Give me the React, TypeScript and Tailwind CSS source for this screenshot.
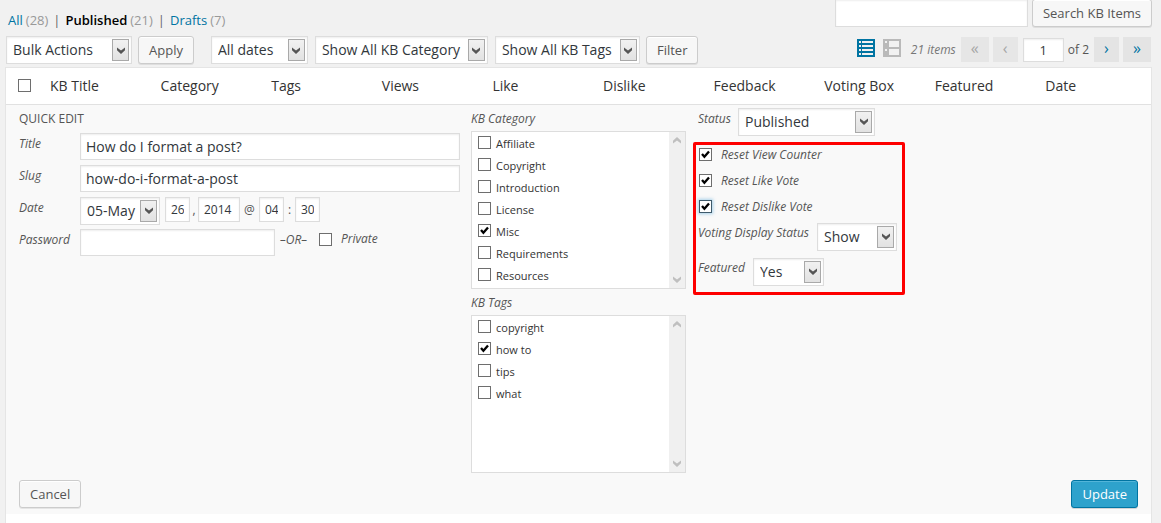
import type { ReactNode } from "react";
import clsx from "clsx";

const fieldBase =
  "border border-[#ddd] bg-white text-[#32373c] shadow-[inset_0_1px_2px_rgba(0,0,0,0.07)] outline-none";

function Select({ id, label, options, className }: { id: string; label?: string; options: string[]; className: string }) {
  return (
    <span className={clsx("relative block h-7 shrink-0", className)}>
      <select
        id={id}
        aria-label={label}
        className={clsx(fieldBase, "block h-7 w-full appearance-none pr-5 pl-1.5 text-sm leading-6")}
      >
        {options.map((o) => (
          <option key={o}>{o}</option>
        ))}
      </select>
      <span className="pointer-events-none absolute top-[3px] right-[3px] flex h-[22px] w-[17px] items-center justify-center border border-[#a9a9a9] bg-linear-to-b from-[#f1f1f1] to-[#e2e2e2]">
        <svg width="8" height="7" viewBox="0 0 8 7" aria-hidden="true">
          <path d="M0 0.5 L4 3.5 L8 0.5 V3.3 L4 7 L0 3.3 Z" fill="#555" />
        </svg>
      </span>
    </span>
  );
}

function Check({ id, label, checked, glow }: { id: string; label?: string; checked?: boolean; glow?: boolean }) {
  return (
    <span className="relative block size-[13px] shrink-0">
      <input
        id={id}
        type="checkbox"
        aria-label={label}
        defaultChecked={checked}
        className={clsx(
          "peer block size-[13px] appearance-none border bg-white",
          glow ? "border-[#3f5a6b] shadow-[0_0_3px_1px_rgba(90,170,220,0.5)]" : "border-[#6e6e6e]",
        )}
      />
      <svg
        viewBox="0 0 13 13"
        className="pointer-events-none absolute inset-0 hidden size-[13px] peer-checked:block"
        aria-hidden="true"
      >
        <path d="M3 6 L5.4 8.8 L10 3.4" fill="none" stroke="#000" strokeWidth="2.3" />
      </svg>
    </span>
  );
}

function Button({ children, primary }: { children: ReactNode; primary?: boolean }) {
  return (
    <button
      type="button"
      className={clsx(
        "block h-7 shrink-0 rounded-[3px] border px-2.5 text-[13px] leading-[26px] whitespace-nowrap",
        primary
          ? "border-[#0074a2] bg-[#2ea2cc] text-white shadow-[inset_0_1px_0_rgba(120,200,230,0.5),0_1px_0_rgba(0,0,0,0.15)]"
          : "border-[#ccc] bg-[#f7f7f7] text-[#555] shadow-[inset_0_1px_0_#fff,0_1px_0_rgba(0,0,0,0.08)]",
      )}
    >
      {children}
    </button>
  );
}

function PageStep({ children, label, off, className }: { children: string; label: string; off?: boolean; className: string }) {
  return (
    <a
      href="#page"
      aria-label={label}
      className={clsx(
        "flex h-[25px] items-center justify-center pb-1 text-base leading-4",
        off ? "bg-[#e6e6e6] text-[#a5a5a5]" : "bg-[#e4e4e4] text-[#0074a2]",
        className,
      )}
    >
      {children}
    </a>
  );
}

function ItalicLabel({ htmlFor, children, className }: { htmlFor: string; children: string; className?: string }) {
  return (
    <label htmlFor={htmlFor} className={clsx("block text-xs leading-5 whitespace-nowrap text-[#555] italic", className)}>
      {children}
    </label>
  );
}

function ScrollMark({ down }: { down?: boolean }) {
  return (
    <svg width="8" height="7" viewBox="0 0 8 7" className={clsx(down && "rotate-180")} aria-hidden="true">
      <path d="M0 6.5 L4 3.5 L8 6.5 V3.7 L4 0 L0 3.7 Z" fill="#bfbfbf" />
    </svg>
  );
}

function TermList({ title, terms, checked }: { title: string; terms: string[]; checked: string }) {
  return (
    <fieldset>
      <legend className="block h-[26px] pt-1 text-xs leading-5 text-[#555] italic">{title}</legend>
      <div className="flex h-[158px] border border-[#ddd] bg-white">
        <ul className="flex grow flex-col gap-px pt-[3px] pl-1.5">
          {terms.map((t) => (
            <li key={t} className="flex h-[21px] items-start gap-[5px] pt-px">
              <Check id={`term-${t}`} checked={t === checked} />
              <label htmlFor={`term-${t}`} className="text-[11px] leading-4 text-[#333]">
                {t}
              </label>
            </li>
          ))}
        </ul>
        <div className="flex w-4 flex-col items-center justify-between bg-[#f0f0f0] py-[5px]">
          <ScrollMark />
          <ScrollMark down />
        </div>
      </div>
    </fieldset>
  );
}

function TextField({ id, label, value }: { id: string; label: string; value: string }) {
  return (
    <div className="flex h-8">
      <ItalicLabel htmlFor={id} className="w-[61px] shrink-0 pt-px">
        {label}
      </ItalicLabel>
      <input id={id} type="text" defaultValue={value} className={clsx(fieldBase, "h-[27px] min-w-0 grow px-[5px] text-sm")} />
    </div>
  );
}

function DatePart({ label, value, className }: { label: string; value: string; className: string }) {
  return (
    <input
      type="text"
      aria-label={label}
      defaultValue={value}
      className={clsx(fieldBase, "h-[25px] shrink-0 px-[5px] text-xs", className)}
    />
  );
}

function QuickEdit() {
  return (
    <form className="bg-[#f9f9f9] pl-[13px] text-[#555]">
      <div className="grid grid-cols-[441fr_215fr_454fr] gap-[11px]">
        <fieldset>
          <legend className="block h-7 pt-[5px] text-xs leading-[18px] font-medium">QUICK EDIT</legend>
          <TextField id="title" label="Title" value="How do I format a post?" />
          <TextField id="slug" label="Slug" value="how-do-i-format-a-post" />
          <div className="flex h-8 text-xs leading-[25px]">
            <ItalicLabel htmlFor="month" className="w-[61px] shrink-0 pt-px">
              Date
            </ItalicLabel>
            <Select id="month" options={["05-May"]} className="mr-[5px] w-20" />
            <DatePart label="Day" value="26" className="w-[25px]" />
            <span className="w-2 text-center">,</span>
            <DatePart label="Year" value="2014" className="w-[42px]" />
            <span className="w-[19px] text-center">@</span>
            <DatePart label="Hour" value="04" className="w-[25px]" />
            <span className="w-[11px] text-center">:</span>
            <DatePart label="Minute" value="30" className="w-[25px]" />
          </div>
          <div className="flex h-8">
            <ItalicLabel htmlFor="password" className="w-[61px] shrink-0 pt-px">
              Password
            </ItalicLabel>
            <input id="password" type="text" className={clsx(fieldBase, "h-[27px] w-[195px] px-[5px] text-sm")} />
            <em className="w-11 pt-px pl-[5px] text-xs leading-5">–OR–</em>
            <div className="flex h-[21px] items-center gap-[9px]">
              <Check id="private" />
              <ItalicLabel htmlFor="private">Private</ItalicLabel>
            </div>
          </div>
        </fieldset>

        <div>
          <TermList
            title="KB Category"
            terms={["Affiliate", "Copyright", "Introduction", "License", "Misc", "Requirements", "Resources"]}
            checked="Misc"
          />
          <TermList title="KB Tags" terms={["copyright", "how to", "tips", "what"]} checked="how to" />
        </div>

        <div className="pt-[3px]">
          <div className="flex pl-px">
            <ItalicLabel htmlFor="status" className="w-10 pt-px">
              Status
            </ItalicLabel>
            <Select id="status" options={["Published"]} className="w-[137px]" />
          </div>
          <div className="mt-1.5 -ml-1 h-[153px] w-[212px] rounded-[2px] border-[3px] border-[#fe0000] pl-0.5">
            {["Reset View Counter", "Reset Like Vote", "Reset Dislike Vote"].map((t, i) => (
              <div key={t} className="flex h-[26px] items-start gap-[9px] pl-px">
                <div className="pt-[3px]">
                  <Check id={`reset-${i}`} checked glow={i === 2} />
                </div>
                <ItalicLabel htmlFor={`reset-${i}`}>{t}</ItalicLabel>
              </div>
            ))}
            <div className="flex h-[35px]">
              <ItalicLabel htmlFor="voting" className="w-[119px]">
                Voting Display Status
              </ItalicLabel>
              <Select id="voting" options={["Show", "Hide"]} className="w-20" />
            </div>
            <div className="flex">
              <ItalicLabel htmlFor="featured" className="w-[55px]">
                Featured
              </ItalicLabel>
              <Select id="featured" options={["Yes", "No"]} className="w-[71px]" />
            </div>
          </div>
        </div>
      </div>
      <div className="flex justify-between pt-[7px] pr-[13px] pb-1.5">
        <Button>Cancel</Button>
        <Button primary>Update</Button>
      </div>
    </form>
  );
}

const columns = ["KB Title", "Category", "Tags", "Views", "Like", "Dislike", "Feedback", "Voting Box", "Featured", "Date"];

export default function App() {
  return (
    <main className="flex min-h-screen flex-col bg-[#f1f1f1] pr-[9px] pl-[5px] font-['Open_Sans',sans-serif] text-[13px] text-[#555]">
      <div className="flex h-9 justify-between">
        <nav className="flex gap-[5px] pt-2.5 pl-[3px] leading-5 whitespace-nowrap text-[#666]">
          <span className="flex gap-[3px]">
            <a href="#all" className="text-[#0074a2]">All</a> <span className="text-[#999]">(28)</span>
          </span>
          <span>|</span>
          <span className="flex gap-[3px]">
            <a href="#published" className="font-semibold text-black">Published</a> <span className="text-[#999]">(21)</span>
          </span>
          <span>|</span>
          <span className="flex gap-[3px]">
            <a href="#drafts" className="text-[#0074a2]">Drafts</a> <span className="text-[#999]">(7)</span>
          </span>
        </nav>
        <div className="-mt-px flex gap-1">
          <input type="search" aria-label="Search" className={clsx(fieldBase, "h-7 w-[193px] px-[5px] text-sm")} />
          <Button>Search KB Items</Button>
        </div>
      </div>

      <div className="flex h-[31px] items-start justify-between">
        <div className="flex gap-[7px] pl-px">
          <div className="flex gap-1.5 pr-[10px]">
            <Select id="bulk" label="Bulk actions" options={["Bulk Actions"]} className="w-[126px]" />
            <Button>Apply</Button>
          </div>
          <Select id="dates" label="Dates" options={["All dates"]} className="w-[97px]" />
          <Select id="category" label="Category" options={["Show All KB Category"]} className="w-[173px]" />
          <div className="flex gap-1.5">
            <Select id="tags" label="Tags" options={["Show All KB Tags"]} className="w-[145px]" />
            <Button>Filter</Button>
          </div>
        </div>
        <div className="flex gap-1 pt-px pr-px">
          <div className="flex gap-2 pt-0.5 pr-1.5">
            <a href="#list" aria-label="List view" className="block">
              <svg width="18" height="18" viewBox="0 0 18 18" shapeRendering="crispEdges">
                <path d="M0 0H18V18H0Z" fill="#0074a2" />
                <path
                  d="M2 2h2v2H2zM5 2h11v2H5zM2 6h2v2H2zM5 6h11v2H5zM2 10h2v2H2zM5 10h11v2H5zM2 14h2v2H2zM5 14h11v2H5z"
                  fill="#f1f1f1"
                />
              </svg>
            </a>
            <a href="#excerpt" aria-label="Excerpt view" className="block">
              <svg width="18" height="18" viewBox="0 0 18 18" shapeRendering="crispEdges">
                <path d="M0 0H18V18H0Z" fill="#b9b9b9" />
                <path d="M2 2h2v2H2zM6 2h10v6H6zM2 10h2v2H2zM6 10h10v6H6z" fill="#f1f1f1" />
              </svg>
            </a>
          </div>
          <em className="pr-px text-xs leading-[25px] whitespace-nowrap text-[#777]">21 items</em>
          <PageStep off label="First page" className="w-7">«</PageStep>
          <PageStep off label="Previous page" className="w-[25px]">‹</PageStep>
          <input
            type="text"
            aria-label="Current page"
            defaultValue="1"
            className={clsx(fieldBase, "mt-px ml-px h-6 w-[41px] text-center text-[13px]")}
          />
          <span className="pr-px text-xs leading-[25px] whitespace-nowrap">of 2</span>
          <PageStep label="Next page" className="w-[25px]">›</PageStep>
          <PageStep label="Last page" className="w-7">»</PageStep>
        </div>
      </div>

      <div className="grow border border-b-0 border-[#e5e5e5] bg-white">
        <table className="w-full table-fixed border-collapse">
          <thead>
            <tr className="h-9 border-b border-[#e1e1e1]">
              <th className="w-[35px] p-0 pl-3">
                <Check id="select-all" label="Select all" />
              </th>
              {columns.map((c, i) => (
                <th
                  key={c}
                  scope="col"
                  className={clsx(
                    "p-0 pl-[9px] text-left text-sm font-normal whitespace-nowrap text-[#333]",
                    i < columns.length - 1 && "w-[9.66%]",
                  )}
                >
                  {c}
                </th>
              ))}
            </tr>
          </thead>
          <tbody>
            <tr>
              <td colSpan={11} className="p-0">
                <QuickEdit />
              </td>
            </tr>
          </tbody>
        </table>
      </div>
    </main>
  );
}
